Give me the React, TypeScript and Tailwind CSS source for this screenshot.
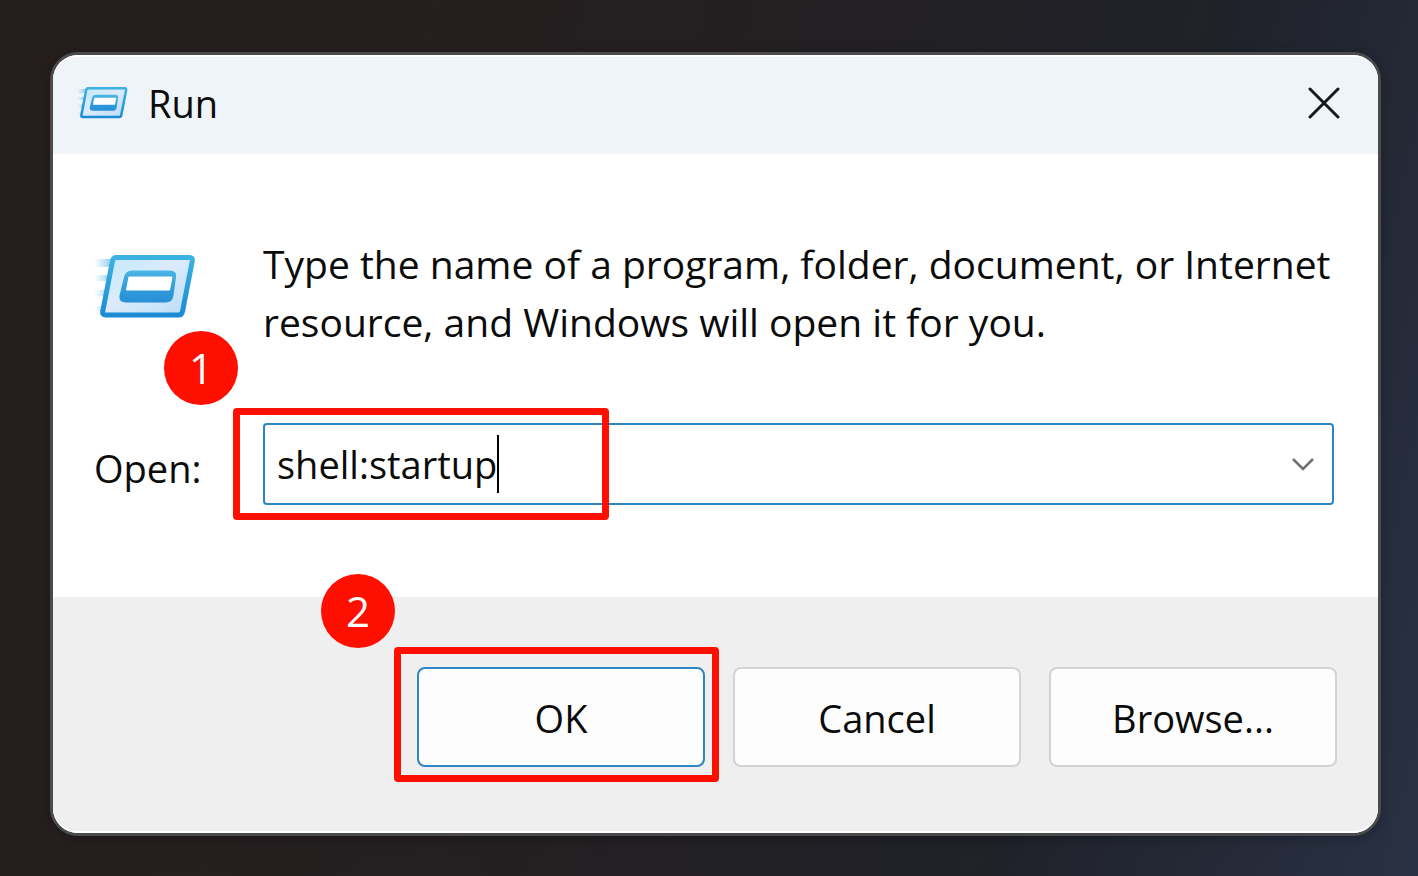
import { useId, useState, type ReactNode } from "react";

function RunIcon({ className }: { className: string }) {
  const id = useId();
  const edge = `${id}-edge`;
  const face = `${id}-face`;
  const trail = `${id}-trail`;
  const bar = `${id}-bar`;
  return (
    <svg viewBox="0 0 102 66" className={className} aria-hidden="true">
      <defs>
        <linearGradient id={edge} x1="0" y1="0" x2="0" y2="1">
          <stop offset="0" stopColor="#3cb2e2" />
          <stop offset="1" stopColor="#1b8cd3" />
        </linearGradient>
        <linearGradient id={face} x1="0" y1="0" x2="1" y2="1">
          <stop offset="0" stopColor="#c0ebfc" />
          <stop offset="0.45" stopColor="#dcebfb" />
          <stop offset="1" stopColor="#b9dcf7" />
        </linearGradient>
        <linearGradient id={bar} x1="0" y1="0" x2="0" y2="1">
          <stop offset="0" stopColor="#4ab6e4" />
          <stop offset="0.6" stopColor="#2f9bdb" />
          <stop offset="1" stopColor="#2a8fd6" />
        </linearGradient>
        <linearGradient id={trail} gradientUnits="userSpaceOnUse" x1="0" y1="0" x2="18" y2="0">
          <stop offset="0" stopColor="#7cc4e6" stopOpacity="0" />
          <stop offset="1" stopColor="#5eb0dc" stopOpacity="0.7" />
        </linearGradient>
      </defs>
      <g fill={`url(#${trail})`}>
        <path d="M1 6h18v8H1z" />
        <path d="M1 22h14v6H1z" />
        <path d="M1 37h11v6H1z" />
        <path d="M1 53h8v5H1z" />
      </g>
      <path
        d="M22.500 4.500H95.500q3.500 0 2.800 3.500L88.500 58.500q-.7 3.500-4 3.500H12q-4 0-3.300-3.500L18.500 8q.7-3.500 4-3.500z"
        fill={`url(#${face})`}
        stroke={`url(#${edge})`}
        strokeWidth="5"
        strokeLinejoin="round"
      />
      <path
        d="M38 17.500H76q7 0 6 6.500L79.500 42.500q-1.200 7-7.500 7H32q-7.500 0-6.500-7L30 24q1.500-6.500 8-6.500z"
        fill={`url(#${bar})`}
      />
      <path d="M35 24H78L75.500 37H32.500z" fill="#fff" stroke="#fff" strokeWidth="1" strokeLinejoin="round" />
    </svg>
  );
}

function Step({ className, children }: { className: string; children: ReactNode }) {
  return (
    <span
      className={`pointer-events-none absolute z-10 flex size-[74px] items-center justify-center rounded-full bg-[#ff0f00] text-[42px] leading-none text-white ${className}`}
    >
      {children}
    </span>
  );
}

function Highlight({ className }: { className: string }) {
  return (
    <span
      aria-hidden="true"
      className={`pointer-events-none absolute z-10 rounded-[4px] border-[7px] border-[#ff0f00] ${className}`}
    />
  );
}

const buttonBase =
  "h-[100px] w-full rounded-[8px] border-2 bg-[#fdfdfd] pt-[2px] text-[38px] leading-[58px]";

export default function App() {
  const [command, setCommand] = useState("shell:startup");

  return (
    <main className="min-h-screen bg-[linear-gradient(105deg,#261e1d_0%,#241f20_40%,#20222a_75%,#293144_100%)] px-[50px] pt-[52px] pb-10 font-['Open_Sans','Noto_Sans',sans-serif] text-[#0b0b0b] min-[1000px]:pr-[37px]">
      <section
        role="dialog"
        aria-labelledby="run-title"
        className="rounded-[28px] border-3 border-[#4b4a4c] bg-white shadow-[0_2px_12px_rgba(0,0,0,0.25)]"
      >
        <header className="flex h-[99px] items-center rounded-t-[25px] border-t-2 border-white bg-[#eff4f9] pr-[34px] pb-[5px] pl-[24px]">
          <RunIcon className="mb-[2px] w-[51px]" />
          <h1 id="run-title" className="ml-5 flex-1 text-[38px] leading-[58px]">
            Run
          </h1>
          <button type="button" aria-label="Close" className="p-1">
            <svg viewBox="0 0 32 32" className="size-8" aria-hidden="true">
              <path d="M2 2L30 30M30 2L2 30" stroke="#16191d" strokeWidth="3" strokeLinecap="round" fill="none" />
            </svg>
          </button>
        </header>

        <div className="pt-[81px] pr-[44px] pb-[92px] pl-[41px]">
          <div className="flex items-start">
            <RunIcon className="mt-[18px] w-[102px] shrink-0" />
            <p className="ml-[67px] text-[39px] leading-[58px]">
              Type the name of a program, folder, document, or Internet resource, and Windows will open it for you.
            </p>
          </div>

          <div className="mt-[72px] flex items-center">
            <label htmlFor="command" className="w-[169px] shrink-0 pt-2 text-[38px] leading-[58px]">
              Open:
            </label>
            <div className="relative flex h-[82px] min-w-0 flex-1 items-center rounded-[4px] border-2 border-[#2f86c5] bg-white pr-[17px] pl-[12px]">
              <input
                id="command"
                type="text"
                value={command}
                onChange={(event) => setCommand(event.target.value)}
                className="field-sizing-content h-[58px] text-[38px] leading-[58px] caret-transparent outline-none"
              />
              <span aria-hidden="true" className="h-[58px] w-[2px] bg-black" />
              <button type="button" aria-label="Show recent commands" className="ml-auto">
                <svg viewBox="0 0 24 14" className="h-[14px] w-6" aria-hidden="true">
                  <path d="M2 2L12 12L22 2" stroke="#707070" strokeWidth="2.500" fill="none" />
                </svg>
              </button>
              <Highlight className="-top-[17px] -left-[32px] h-[112px] w-[376px]" />
              <Step className="-top-[94px] -left-[101px]">1</Step>
            </div>
          </div>
        </div>

        <footer className="flex justify-end gap-[28px] rounded-b-[25px] border-b-2 border-white bg-[#efefef] pt-[70px] pr-[41px] pb-[64px] pl-[41px]">
          <div className="relative w-[288px]">
            <button type="button" className={`${buttonBase} border-[#2f86c5]`}>
              OK
            </button>
            <Highlight className="-top-[20px] -left-[23px] h-[135px] w-[325px]" />
            <Step className="-top-[93px] -left-[96px]">2</Step>
          </div>
          <div className="w-[288px]">
            <button type="button" className={`${buttonBase} border-[#d3d3d3]`}>
              Cancel
            </button>
          </div>
          <div className="w-[288px]">
            <button type="button" className={`${buttonBase} border-[#d3d3d3]`}>
              Browse...
            </button>
          </div>
        </footer>
      </section>
    </main>
  );
}
